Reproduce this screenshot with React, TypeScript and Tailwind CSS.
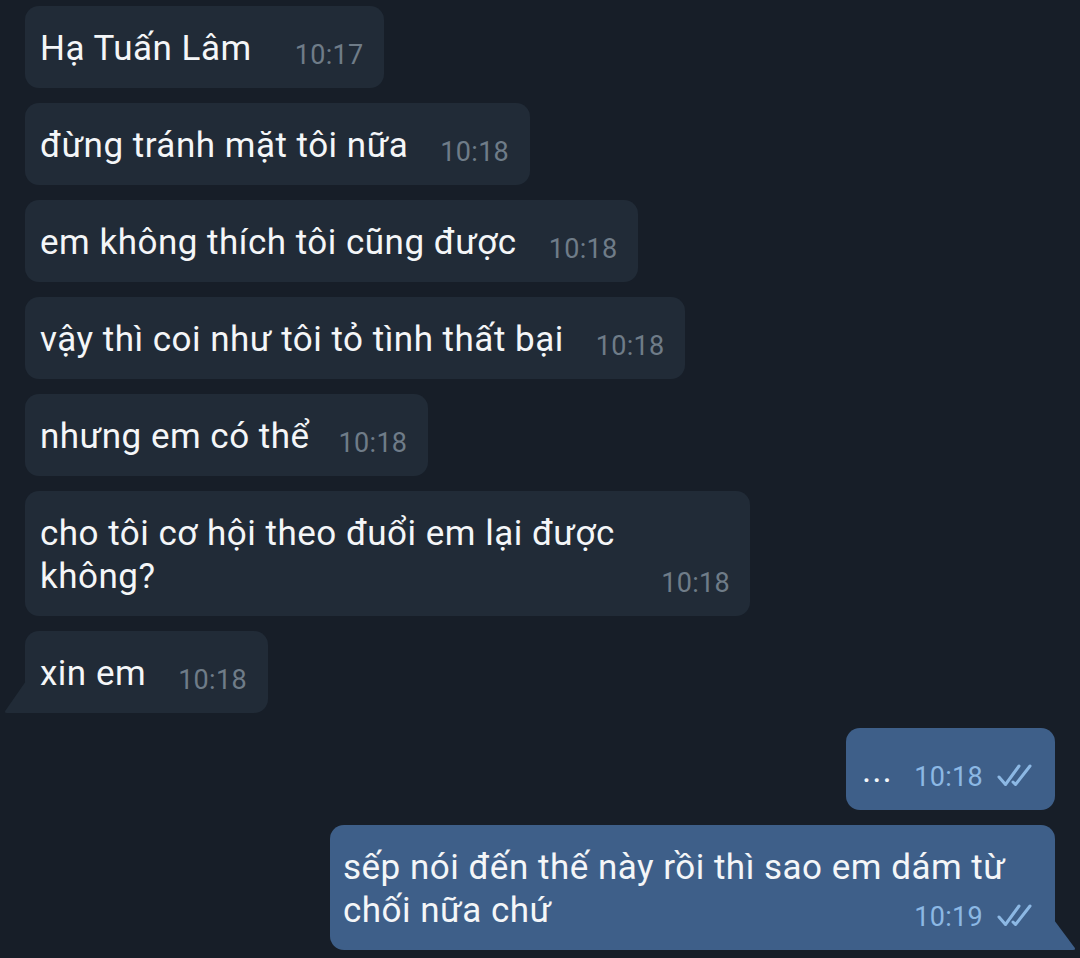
import React from "react";

const font = { fontFamily: "Roboto, 'Noto Sans', sans-serif" };

function Checks() {
  return (
    <svg width="36" height="24" viewBox="0 0 36 24" className="ml-[14px] mb-[5px]" fill="none" stroke="#8cb8e4" strokeWidth="3" strokeLinecap="round" strokeLinejoin="round">
      <path d="M2 14 L8.5 21.5 L22 3" />
      <path d="M16 19 L18.5 21.5 L33 3" />
    </svg>
  );
}

const txt = "text-[35px] leading-[43px] tracking-[0.5px] text-[#f4f6f8] whitespace-nowrap";
const tm = "text-[27px] leading-[30px] tracking-[0.3px] whitespace-nowrap";

function In({ text, time, tail, gap = "ml-[32px]" }: { text: React.ReactNode; time: string; tail?: boolean; gap?: string }) {
  return (
    <div className="relative self-start ml-[25px]">
      <div className={`bg-[#212b37] rounded-[14px] ${tail ? "rounded-bl-none" : ""} pl-[15px] pr-[21px] pt-[21px] pb-[17.5px] flex items-end`}>
        <div className={txt}>{text}</div>
        <div className={`${tm} text-[#6f7c88] ${gap}`}>{time}</div>
      </div>
      {tail && (
        <svg className="absolute left-[-21px] bottom-0" width="22" height="32" viewBox="0 0 22 32">
          <path d="M22 0 L22 32 L3 32 Q0 32 1.5 29.5 Z" fill="#212b37" />
        </svg>
      )}
    </div>
  );
}

export default function App() {
  return (
    <div className="w-[1080px] h-[958px] bg-[#171e28] overflow-hidden flex flex-col gap-[15.5px] pt-[6px]" style={font}>
      <In text="Hạ Tuấn Lâm" time="10:17" gap="ml-[43px]" />
      <In text="đừng tránh mặt tôi nữa" time="10:18" />
      <In text="em không thích tôi cũng được" time="10:18" />
      <In text="vậy thì coi như tôi tỏ tình thất bại" time="10:18" />
      <In text="nhưng em có thể" time="10:18" gap="ml-[29px]" />
      <div className="self-start ml-[25px] w-[725px] bg-[#212b37] rounded-[14px] pl-[15px] pr-[20px] pt-[21px] pb-[17.5px] flex flex-col">
        <div className={txt}>cho tôi cơ hội theo đuổi em lại được</div>
        <div className="flex items-end justify-between">
          <div className={txt}>không?</div>
          <div className={`${tm} text-[#6f7c88]`}>10:18</div>
        </div>
      </div>
      <In text="xin em" time="10:18" tail />
      <div className="self-end mr-[25px] w-[209px] bg-[#3e5f89] rounded-[14px] pl-[16px] pr-[22px] pt-[21px] pb-[17.5px] flex items-end">
        <div className={`${txt} tracking-[1px]`}>...</div>
        <div className={`${tm} text-[#8cb8e4] ml-auto`}>10:18</div>
        <Checks />
      </div>
      <div className="relative self-end mr-[25px]">
        <div className="w-[725px] bg-[#3e5f89] rounded-[14px] rounded-br-none pl-[13px] pr-[22px] pt-[21px] pb-[17.5px] flex flex-col">
          <div className={txt}>sếp nói đến thế này rồi thì sao em dám từ</div>
          <div className="flex items-end justify-between">
            <div className={txt}>chối nữa chứ</div>
            <div className="flex items-end">
              <div className={`${tm} text-[#8cb8e4]`}>10:19</div>
              <Checks />
            </div>
          </div>
        </div>
        <svg className="absolute right-[-21px] bottom-0" width="22" height="30" viewBox="0 0 22 30">
          <path d="M0 0 L0 30 L19 30 Q22 30 20.5 27.5 Z" fill="#3e5f89" />
        </svg>
      </div>
    </div>
  );
}
